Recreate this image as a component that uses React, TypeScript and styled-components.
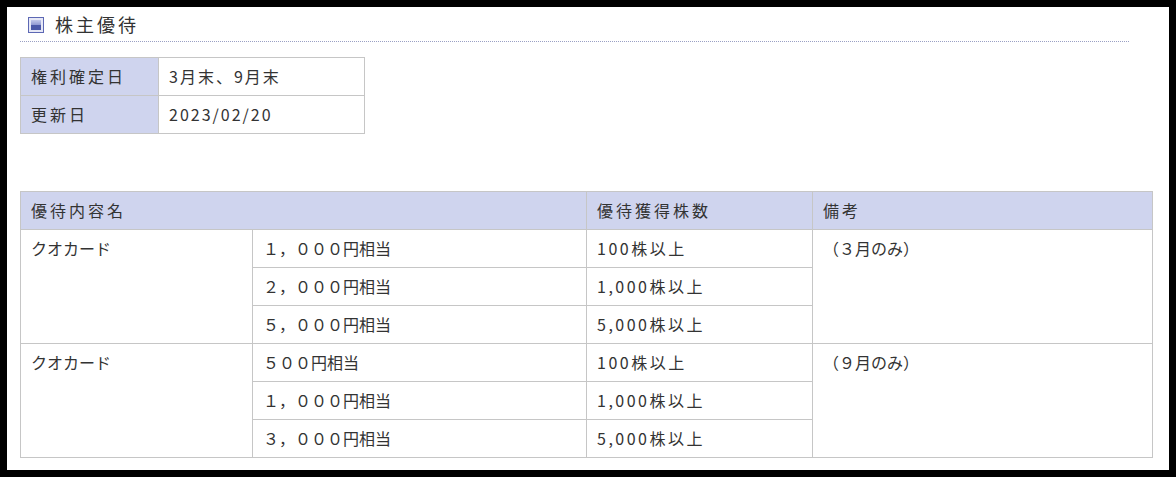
import React from 'react'
import styled, { createGlobalStyle } from 'styled-components'

const GlobalStyle = createGlobalStyle`
  html, body {
    margin: 0;
    padding: 0;
    background: #fff;
  }
  body {
    font-family: "Noto Sans CJK JP", "Noto Sans", sans-serif;
    color: #333;
  }
`

const keyRows = [
  { label: '権利確定日', value: '3月末、9月末' },
  { label: '更新日', value: '2023/02/20' },
]

const groups = [
  {
    name: 'クオカード',
    note: '（３月のみ）',
    items: [
      { content: '１，０００円相当', shares: '100株以上' },
      { content: '２，０００円相当', shares: '1,000株以上' },
      { content: '５，０００円相当', shares: '5,000株以上' },
    ],
  },
  {
    name: 'クオカード',
    note: '（９月のみ）',
    items: [
      { content: '５００円相当', shares: '100株以上' },
      { content: '１，０００円相当', shares: '1,000株以上' },
      { content: '３，０００円相当', shares: '5,000株以上' },
    ],
  },
]

function HeadingIcon() {
  return (
    <svg width="16" height="16" viewBox="0 0 16 16">
      <defs>
        <linearGradient id="hi-top" x1="0" y1="0" x2="0" y2="1">
          <stop offset="0" stopColor="#c3c8ea" />
          <stop offset="1" stopColor="#8f98d2" />
        </linearGradient>
      </defs>
      <rect x="0.5" y="0.5" width="15" height="15" fill="#e6e8f6" stroke="#5d68b4" />
      <rect x="3" y="3" width="10" height="5" fill="url(#hi-top)" />
      <rect x="3" y="8" width="10" height="5" fill="#4b58a8" />
    </svg>
  )
}

export default function App() {
  return (
    <>
      <GlobalStyle />
      <Frame>
        <Heading>
          <HeadingIcon />
          <HeadingText>株主優待</HeadingText>
        </Heading>

        <KeyTable>
          <tbody>
            {keyRows.map((r) => (
              <tr key={r.label}>
                <Th>{r.label}</Th>
                <Td $spacing={2}>{r.value}</Td>
              </tr>
            ))}
          </tbody>
        </KeyTable>

        <MainTable>
          <colgroup>
            <col style={{ width: 232 }} />
            <col style={{ width: 334 }} />
            <col style={{ width: 226 }} />
            <col />
          </colgroup>
          <thead>
            <tr>
              <Th colSpan={2}>優待内容名</Th>
              <Th>優待獲得株数</Th>
              <Th>備考</Th>
            </tr>
          </thead>
          <tbody>
            {groups.map((g, gi) =>
              g.items.map((it, i) => (
                <tr key={`${gi}-${i}`}>
                  {i === 0 && <Td rowSpan={g.items.length}>{g.name}</Td>}
                  <Td>{it.content}</Td>
                  <Td $spacing={2.5}>{it.shares}</Td>
                  {i === 0 && <Td rowSpan={g.items.length}>{g.note}</Td>}
                </tr>
              ))
            )}
          </tbody>
        </MainTable>
      </Frame>
    </>
  )
}

const Frame = styled.div`
  box-sizing: border-box;
  width: 1176px;
  height: 477px;
  border: 7px solid #000;
  padding: 0 17px 0 13px;
  background: #fff;
  overflow: hidden;
`

const Heading = styled.div`
  display: flex;
  align-items: center;
  gap: 11px;
  height: 34px;
  margin-right: 23px;
  padding-left: 8px;
  border-bottom: 1px dotted #9aa0c4;

  svg {
    flex: none;
    margin-top: 1px;
  }
`

const HeadingText = styled.h2`
  margin: 0;
  font-size: 18px;
  font-weight: normal;
  letter-spacing: 3px;
  color: #333;
  line-height: 1;
`

const BaseTable = styled.table`
  border-collapse: collapse;
  font-size: 16px;
  color: #333;
`

const KeyTable = styled(BaseTable)`
  margin-top: 15px;
  width: 345px;

  th {
    width: 138px;
  }
`

const MainTable = styled(BaseTable)`
  margin-top: 57px;
  width: 1133px;
  table-layout: fixed;
`

const Th = styled.th`
  box-sizing: border-box;
  height: 38px;
  padding: 0 10px 2px;
  text-align: left;
  vertical-align: middle;
  font-weight: normal;
  letter-spacing: 3px;
  background: #cfd4ee;
  border: 1px solid #c6c6c6;
  white-space: nowrap;
`

const Td = styled.td<{ $spacing?: number }>`
  height: 38px;
  padding: 6px 10px 0;
  box-sizing: border-box;
  text-align: left;
  vertical-align: top;
  background: #fff;
  border: 1px solid #c6c6c6;
  white-space: nowrap;
  letter-spacing: ${({ $spacing = 0 }) => `${$spacing}px`};
`
